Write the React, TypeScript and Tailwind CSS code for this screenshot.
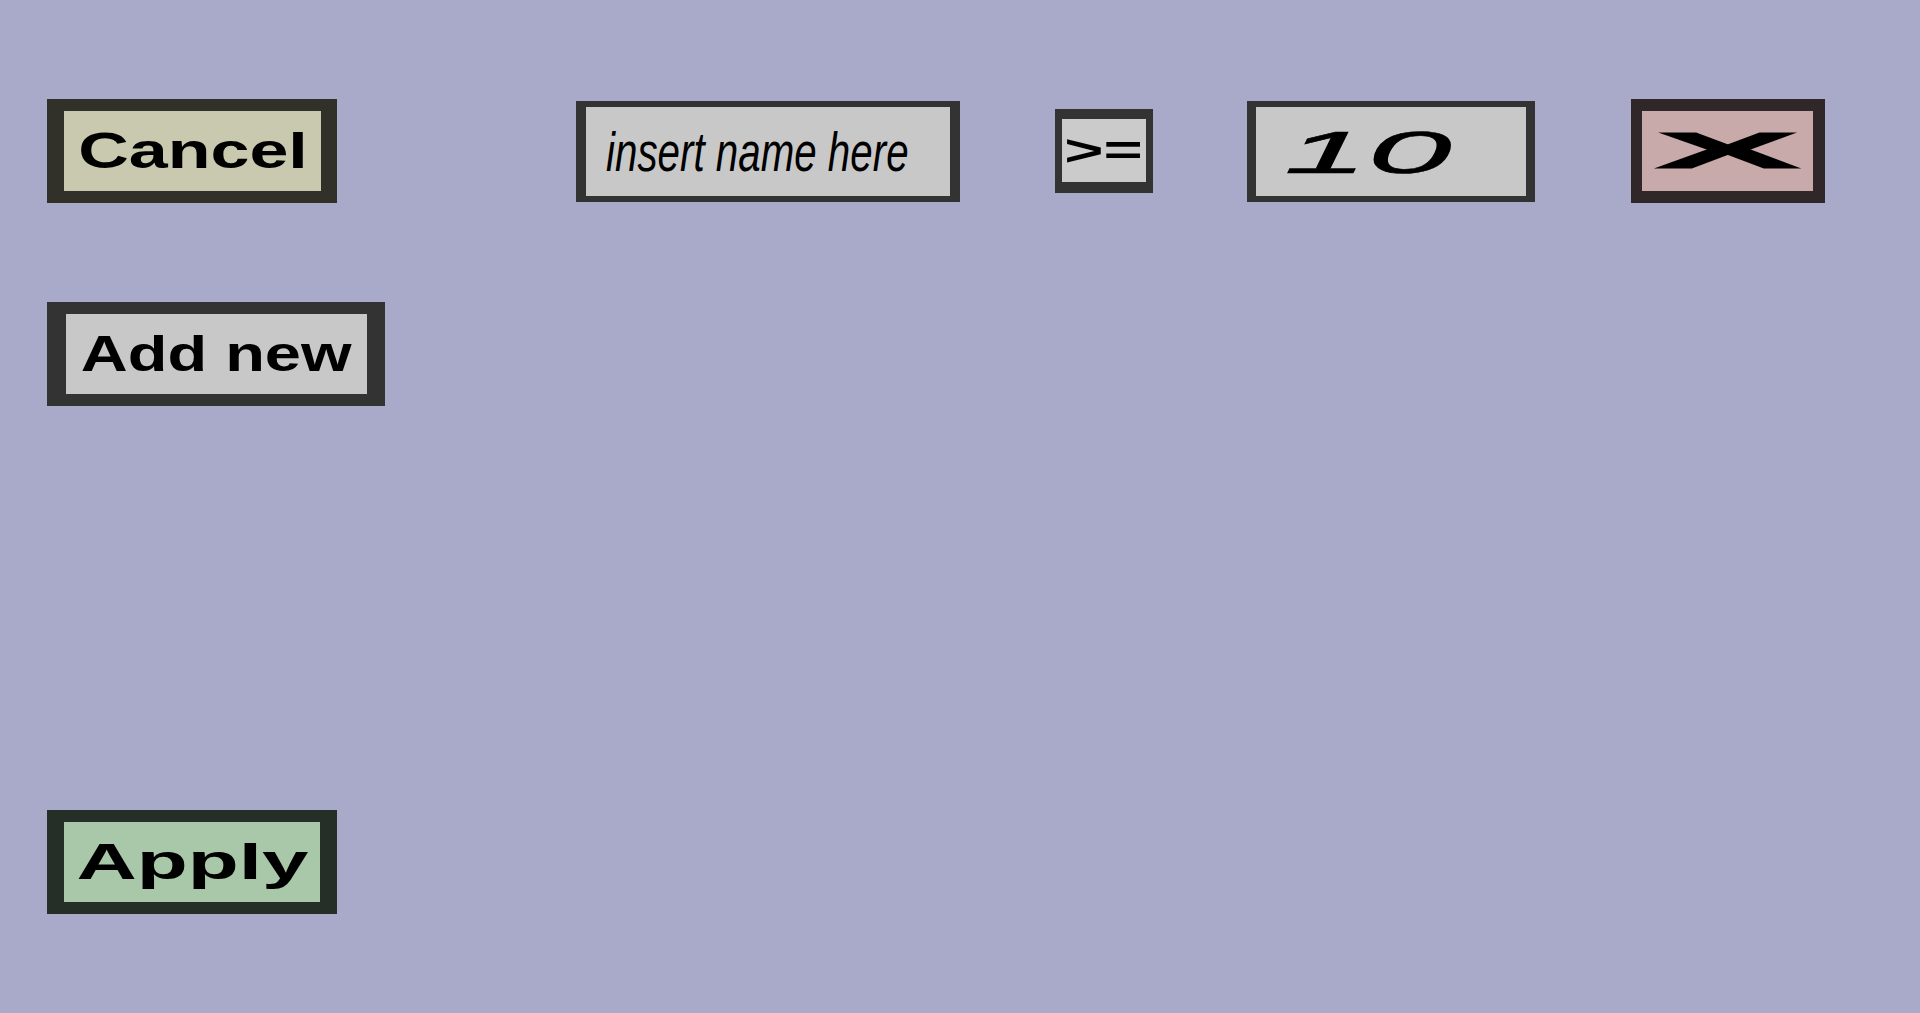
import React from "react";

const font = "font-['Liberation_Sans',Arial,sans-serif]";

const App = () => {
  return (
    <div className={`w-full h-[1013px] bg-[#a9a9c9] pt-[99px] pl-[47px] flex flex-col ${font}`}>
      <div className="flex items-center h-[104px]">
        {/* cancel */}
        <button className="w-[290px] h-[104px] border-l-[17px] border-r-[16px] border-y-[12px] border-[#31312a] bg-[#c8c9ae] flex items-center justify-center">
          <span className="inline-block whitespace-nowrap text-[50px] font-bold leading-none text-black scale-x-[1.4]">Cancel</span>
        </button>

        {/* name input */}
        <div className="ml-[239px] w-[384px] h-[101px] border-x-[10px] border-y-[6px] border-[#333333] bg-[#c8c8c8] flex items-center pl-[20px] pt-[2px]">
          <span className="inline-block whitespace-nowrap origin-left text-[56px] italic leading-none text-black scale-x-[0.72]">insert name here</span>
        </div>

        {/* operator */}
        <button className="ml-[95px] w-[98px] h-[84px] border-x-[7px] border-t-[10px] border-b-[11px] border-[#333333] bg-[#cbcbcb] flex items-center justify-center">
          <span className="inline-block whitespace-nowrap text-[42px] font-bold leading-none text-black scale-x-[1.6]">&gt;=</span>
        </button>

        {/* value */}
        <div className="ml-[94px] w-[288px] h-[101px] border-x-[9px] border-y-[6px] border-[#333333] bg-[#c8c8c8] flex items-center pl-[28px] pt-[4px]">
          <span className="inline-block whitespace-nowrap origin-left text-[59px] italic leading-none text-black scale-x-[2.55] [-webkit-text-stroke:0.6px_#000]">10</span>
        </div>

        {/* remove */}
        <button className="ml-[96px] w-[194px] h-[104px] border-l-[11px] border-r-[12px] border-y-[12px] border-[#302828] bg-[#c9aaaa] flex items-center justify-center">
          <span className="inline-block whitespace-nowrap text-[50px] font-bold leading-none text-black scale-x-[4.3] [-webkit-text-stroke:1px_#000]">X</span>
        </button>
      </div>

      <button className="mt-[99px] w-[338px] h-[104px] border-l-[19px] border-r-[18px] border-y-[12px] border-[#333333] bg-[#c8c8c8] flex items-center justify-center">
        <span className="inline-block whitespace-nowrap text-[50px] font-bold leading-none text-black scale-x-[1.3]">Add new</span>
      </button>

      <button className="mt-[404px] w-[290px] h-[104px] border-x-[17px] border-y-[12px] border-[#262e28] bg-[#a8c8a9] flex items-center justify-center">
        <span className="inline-block whitespace-nowrap text-[50px] font-bold leading-none text-black scale-x-[1.67]">Apply</span>
      </button>
    </div>
  );
};

export default App;
